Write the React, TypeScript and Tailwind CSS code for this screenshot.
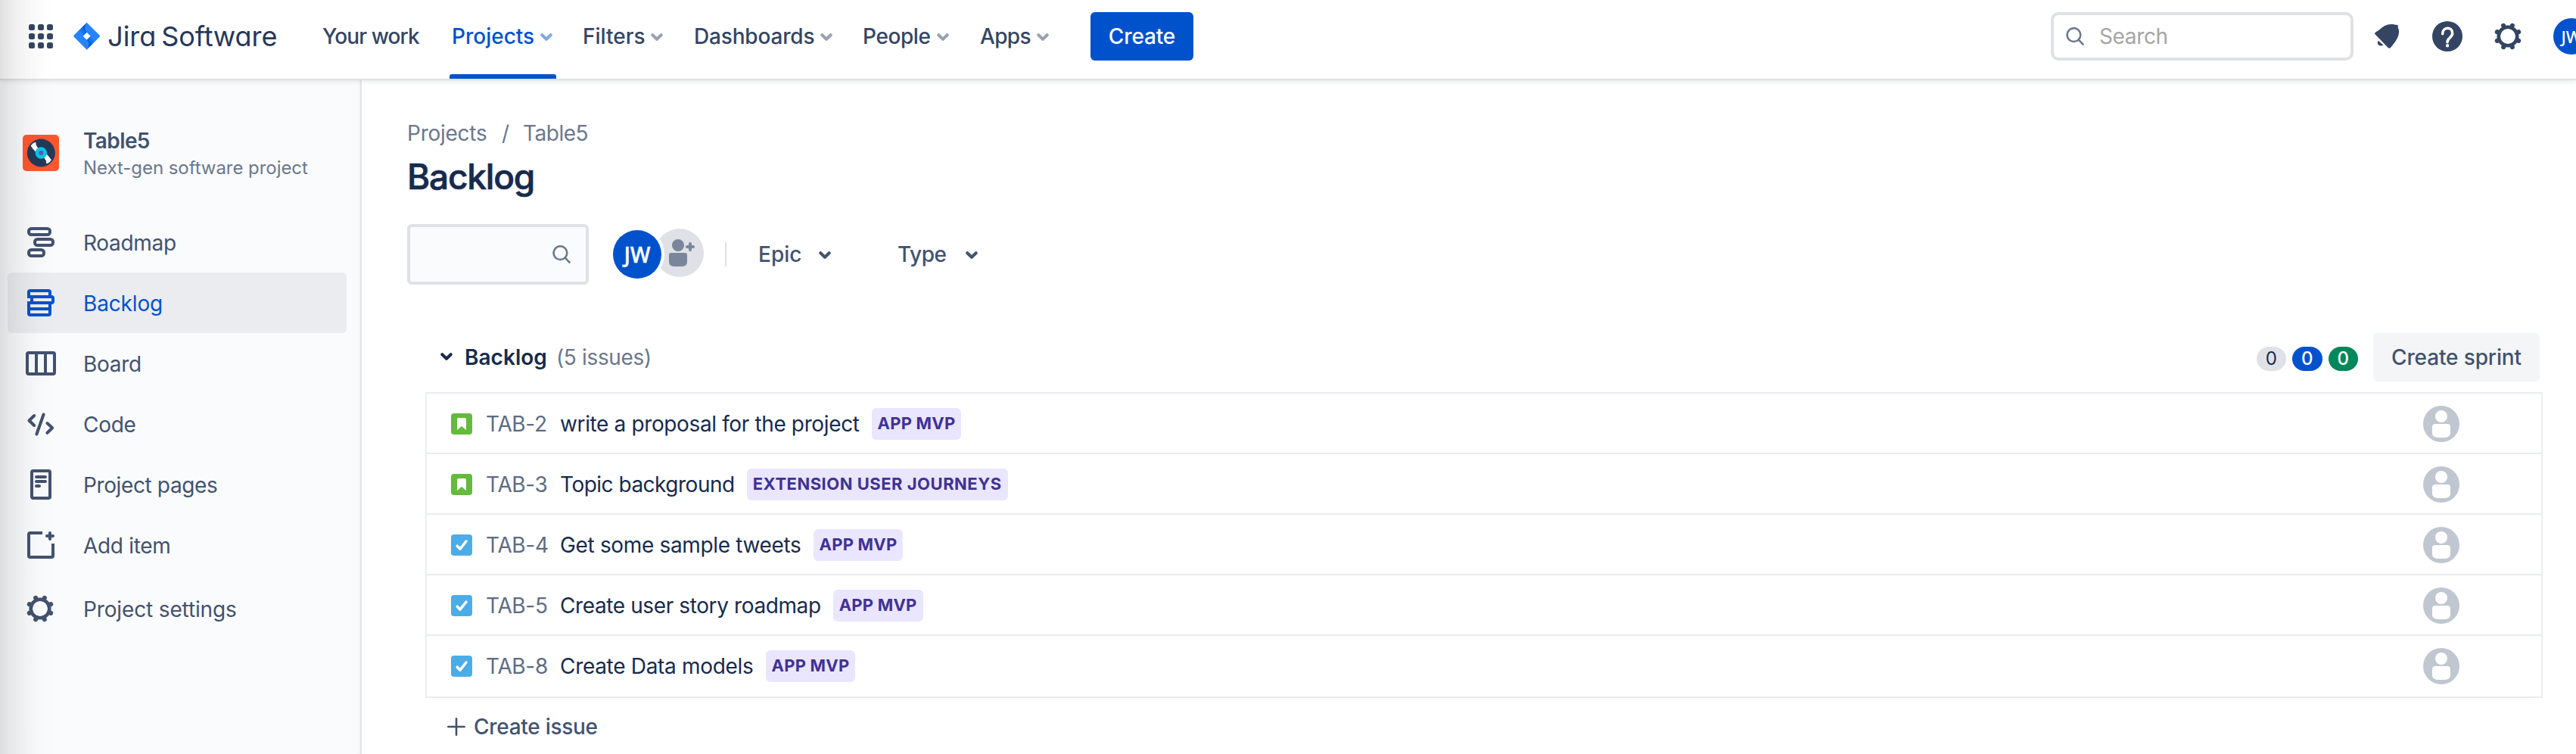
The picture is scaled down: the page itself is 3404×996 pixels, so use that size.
import React from "react";
import { clsx } from "clsx";

function Chevron({ className }: { className?: string }) {
  return (
    <svg viewBox="0 0 16 10" className={clsx("h-[10px] w-4 shrink-0", className)} fill="none" stroke="currentColor" strokeWidth="4" strokeLinecap="round" strokeLinejoin="round">
      <path d="M2.3 2.2 8 7.8l5.7-5.6" />
    </svg>
  );
}

function SearchIcon({ className }: { className?: string }) {
  return (
    <svg viewBox="0 0 24 24" className={clsx("size-6 shrink-0", className)} fill="none" stroke="currentColor" strokeWidth="2.6" strokeLinecap="round">
      <circle cx="10.4" cy="10.1" r="8.9" />
      <path d="m16.8 16.6 5.8 6" />
    </svg>
  );
}

const teeth = [22.5, 67.5, 112.5, 157.5, 202.5, 247.5, 292.5, 337.5];

function Gear({ className }: { className?: string }) {
  return (
    <svg viewBox="-24 -24 48 48" className={clsx("size-12 shrink-0", className)} fill="none" stroke="currentColor">
      <circle r="12.3" strokeWidth="4.6" />
      {teeth.map((a) => (
        <path key={a} d="M0-13v-2.4" strokeWidth="6" strokeLinecap="round" transform={`rotate(${a})`} />
      ))}
    </svg>
  );
}

function JiraMark() {
  return (
    <svg viewBox="232 88 106 112" className="h-[37.3px] w-[35.3px] shrink-0">
      <defs>
        <linearGradient id="fold-top" x1="285" y1="108" x2="257" y2="128" gradientUnits="userSpaceOnUse">
          <stop offset="0.1" stopColor="#0052cc" />
          <stop offset="1" stopColor="#2684ff" />
        </linearGradient>
        <linearGradient id="fold-bottom" x1="286" y1="180" x2="314" y2="160" gradientUnits="userSpaceOnUse">
          <stop offset="0.1" stopColor="#0052cc" />
          <stop offset="1" stopColor="#2684ff" />
        </linearGradient>
      </defs>
      <path fill="#2684ff" fillRule="evenodd" d="M285 90l50 50q4 4 0 8l-50 50-50-50q-4-4 0-8zM285 129l-15 15 15 15.500 15-15.500z" />
      <path fill="url(#fold-top)" d="M285 91c-10 11-10 27 0 38l-15 15-17-21z" />
      <path fill="url(#fold-bottom)" d="M285 197c11-11 11-27 0-37.500l15-15.500 17 21z" />
    </svg>
  );
}

function AppSwitcher() {
  return (
    <div className="grid grid-cols-3 gap-1 text-[#344563]">
      {[0, 1, 2, 3, 4, 5, 6, 7, 8].map((i) => (
        <span key={i} className="size-2 rounded-[2.500px] bg-[#344563]" />
      ))}
    </div>
  );
}

const topNav = [
  { label: "Your work", slot: "w-[168px]", inner: "w-[140px]", tracking: "tracking-[-0.88px]", menu: false },
  { label: "Projects", slot: "w-[173px]", inner: "w-[136px] pl-[3px]", tracking: "tracking-normal", menu: true, active: true },
  { label: "Filters", slot: "w-[147px]", inner: "w-[109px] pl-[3px]", tracking: "tracking-normal", menu: true },
  { label: "Dashboards", slot: "w-[223px]", inner: "w-[186px] pl-[3px]", tracking: "tracking-[-0.17px]", menu: true },
  { label: "People", slot: "w-[155px]", inner: "w-[117px] pl-[3px]", tracking: "tracking-[-0.4px]", menu: true },
  { label: "Apps", slot: "w-[149px]", inner: "w-[94px] pl-[3px]", tracking: "tracking-[-0.66px]", menu: true },
];

function Header() {
  return (
    <header className="relative z-10 flex h-[106px] items-center border-b-2 border-[#dde2e6] bg-white pb-[8px] pl-[38px] shadow-[0_1px_6px_rgba(9,30,66,0.12)]">
      <AppSwitcher />
      <div className="ml-[27px] flex w-[331px] items-center">
        <JiraMark />
        <span className="ml-[10px] whitespace-nowrap text-[36px] leading-none tracking-[-0.1px] text-[#253858] [font-feature-settings:'cv11'] [word-spacing:-3px]">Jira Software</span>
      </div>
      <nav className="-ml-[2px] flex h-24 items-center text-[28px] font-medium leading-none text-[#344563]">
        {topNav.map((n) => (
          <div key={n.label} className={clsx("relative flex h-full shrink-0 items-center", n.slot)}>
            <div className={clsx("flex items-center justify-between", n.inner, n.tracking, n.active && "text-[#0052cc]")}>
              <span>{n.label}</span>
              {n.menu && <Chevron className={n.active ? "mt-[2px] text-[#7fa8e5]" : "mt-[2px] text-[#99a2b1]"} />}
            </div>
            {n.active && <span className="absolute left-0 top-[98px] h-[6px] w-[141px] rounded-t-[3px] bg-[#0052cc]" />}
          </div>
        ))}
      </nav>
      <button className="h-16 w-[136px] rounded-[6px] bg-[#0052cc] text-[28px] font-medium leading-none tracking-[-0.14px] text-white">Create</button>
      <div className="ml-auto flex w-[694px] items-center overflow-hidden">
        <div className="flex h-16 w-[400px] shrink-0 items-center rounded-[10px] border-4 border-[#dfe1e6] bg-white pl-4">
          <SearchIcon className="text-[#6b778c]" />
          <span className="ml-[20px] text-[28px] leading-none tracking-[-0.37px] text-[#a5a5a5]">Search</span>
        </div>
        <svg viewBox="78 60 108 108" className="ml-[26px] size-9 shrink-0 text-[#344563]" fill="currentColor">
          <path d="M84 104q-1-3 3-6l17-11c12-11 26-21 46-21 8 0 12 1 18 3l5-1 4 4-1 7c3 5 5 13 4 21-1 15-9 27-16 37l-17 22q-5 5-10 0z" />
          <path d="M98 131c-5 8-2 19 9 20 6 0 9-1 12-2z" />
        </svg>
        <svg viewBox="312 54 120 120" className="ml-[42px] size-10 shrink-0">
          <circle cx="372" cy="114" r="60" fill="#344563" />
          <path d="M353 104C353 75 392 75 392 101c0 20-20 17-20 36" fill="none" stroke="#fff" strokeWidth="10.500" strokeLinecap="round" />
          <rect x="366" y="145" width="12" height="12" rx="3" fill="#fff" />
        </svg>
        <Gear className="ml-[35.500px] text-[#344563]" />
        <div className="ml-[36.500px] flex size-12 shrink-0 items-center justify-center rounded-full bg-[#0052cc] font-['Noto_Sans'] text-[22px] font-medium leading-none text-white">JW</div>
      </div>
    </header>
  );
}

function LineIcon({ children }: { children: React.ReactNode }) {
  return (
    <svg viewBox="0 0 48 48" className="size-12 shrink-0" fill="none" stroke="currentColor" strokeWidth="4">
      {children}
    </svg>
  );
}

const sideNav = [
  {
    label: "Roadmap",
    tracking: "tracking-[-0.3px]",
    icon: (
      <LineIcon>
        <rect x="8" y="6" width="28" height="8" rx="3.500" />
        <rect x="16" y="20" width="24" height="8" rx="3.500" />
        <rect x="8" y="34" width="20" height="8" rx="3.500" />
      </LineIcon>
    ),
  },
  {
    label: "Backlog",
    tracking: "tracking-[-0.16px]",
    active: true,
    icon: (
      <LineIcon>
        <path d="M8 18v-8q0-2 2-2h24q2 0 2 2v6H8" />
        <path d="M12 16v8M36 16h2q2 0 2 2v4q0 2-2 2H8M8 22v16q0 2 2 2h24q2 0 2-2V24M8 32h28" />
      </LineIcon>
    ),
  },
  {
    label: "Board",
    tracking: "tracking-[-0.3px]",
    icon: (
      <LineIcon>
        <rect x="6" y="10" width="36" height="28" rx="2" />
        <path d="M18 10v28M30 10v28" />
      </LineIcon>
    ),
  },
  {
    label: "Code",
    tracking: "tracking-[-0.3px]",
    icon: (
      <LineIcon>
        <path d="m15.200 13-6.700 6.500 6.700 6.500M27.600 11.500l-9.200 26M32.400 23l6.800 6.200-6.800 6.600" strokeLinecap="round" strokeLinejoin="round" />
      </LineIcon>
    ),
  },
  {
    label: "Project pages",
    tracking: "tracking-[-0.38px]",
    icon: (
      <LineIcon>
        <rect x="12" y="6" width="24" height="36" rx="2" />
        <path d="M18 14h12M18 20h12M18 26h4" strokeLinecap="round" />
      </LineIcon>
    ),
  },
  {
    label: "Add item",
    tracking: "tracking-[-0.3px]",
    icon: (
      <LineIcon>
        <path d="M26 8H10q-2 0-2 2v28q0 2 2 2h28q2 0 2-2V22" />
        <path d="M36 8v8M32 12h8" strokeLinecap="round" />
      </LineIcon>
    ),
  },
  { label: "Project settings", tracking: "tracking-[-0.14px]", icon: <Gear className="-ml-px mr-px" />, spaced: true },
];

function Sidebar() {
  return (
    <aside className="flex w-[478px] shrink-0 flex-col border-r-2 border-[#e4e5e7] bg-[#fafbfc] px-[10px] pt-[62px] shadow-[inset_-4px_0_4px_-3px_rgba(9,30,66,0.05)]">
      <div className="flex items-start pl-5">
        <svg viewBox="0 0 48 48" className="mt-[10px] size-12 shrink-0">
          <rect width="48" height="48" rx="5" fill="#ff5630" />
          <circle cx="24.300" cy="24" r="18.500" fill="#253858" />
          <path fill="#fff" d="M10.700 14.700q2-4 6.600-5l.4 4 3.600 5.300-4.300 3.600-3.800-4.300zM37.900 33.300q-2 4-6.600 5l-.4-4-3.600-5.300 4.300-3.600 3.800 4.300z" />
          <circle cx="24.300" cy="24" r="7.700" fill="#00c7e5" />
          <circle cx="24.300" cy="24" r="3" fill="#6554c0" />
        </svg>
        <div className="ml-[32px] whitespace-nowrap">
          <div className="text-[28px] font-semibold leading-[36px] tracking-[-0.6px] text-[#42526e]">Table5</div>
          <div className="text-[24px] leading-[35px] tracking-[-0.05px] text-[#6b778c]">Next-gen software project</div>
        </div>
      </div>
      <nav className="mt-[41px] w-[448px] text-[28px] leading-none text-[#42526e]">
        {sideNav.map((n) => (
          <div
            key={n.label}
            className={clsx("flex h-20 items-center rounded-[6px] pl-5", n.active && "bg-[#ebecf0] text-[#0052cc]", n.spaced && "mt-1")}
          >
            {n.icon}
            <span className={clsx("ml-[32px] mt-[2px]", n.tracking)}>{n.label}</span>
          </div>
        ))}
      </nav>
    </aside>
  );
}

function Filters() {
  return (
    <div className="mt-[35px] flex h-20 items-center text-[28px] font-medium leading-none text-[#42526e]">
      <div className="flex h-20 w-[240px] items-center justify-end rounded-[6px] border-4 border-[#dfe1e6] bg-[#fafbfc] pr-5">
        <SearchIcon className="text-[#6b778c]" />
      </div>
      <div className="z-[1] ml-8 flex size-16 items-center justify-center rounded-full bg-[#0052cc] font-['Noto_Sans'] text-[28px] text-white ring-4 ring-white [-webkit-text-stroke:0.500px_#fff]">JW</div>
      <svg viewBox="0 0 64 64" className="-ml-2 -mt-1 size-16">
        <circle cx="32" cy="32" r="32" fill="#dfe1e6" />
        <circle cx="30" cy="22" r="8" fill="#7a869a" />
        <path d="M18 35q0-3 3-3h18q3 0 3 3v9q0 6-8 6h-8q-8 0-8-6z" fill="#7a869a" />
        <path d="M46 20v8M42 24h8" stroke="#7a869a" strokeWidth="4" strokeLinecap="round" />
      </svg>
      <span className="ml-7 h-8 w-[2px] bg-[#dfe1e6]" />
      <div className="ml-[42px] flex w-24 items-center justify-between">
        Epic
        <Chevron className="mt-[2px]" />
      </div>
      <div className="ml-[88px] flex w-[106px] items-center justify-between tracking-[-0.5px]">
        Type
        <Chevron className="mt-[2px]" />
      </div>
    </div>
  );
}

const issues = [
  { key: "TAB-2", story: true, title: "write a proposal for the project", tracking: "tracking-[-0.37px]", epic: "APP MVP" },
  { key: "TAB-3", story: true, title: "Topic background", tracking: "tracking-[-0.5px]", epic: "EXTENSION USER JOURNEYS" },
  { key: "TAB-4", story: false, title: "Get some sample tweets", tracking: "tracking-[-0.34px]", epic: "APP MVP" },
  { key: "TAB-5", story: false, title: "Create user story roadmap", tracking: "tracking-[-0.39px]", epic: "APP MVP" },
  { key: "TAB-8", story: false, title: "Create Data models", tracking: "tracking-[-0.31px]", epic: "APP MVP" },
];

function TypeIcon({ story }: { story: boolean }) {
  return (
    <svg viewBox="0 0 28 28" className="size-7 shrink-0">
      <rect width="28" height="28" rx="4" fill={story ? "#63ba3c" : "#4bade8"} />
      {story ? (
        <path d="M8 8q0-2 2-2h8q2 0 2 2v14l-6-5-6 5z" fill="#fff" />
      ) : (
        <path d="m8.200 15.200 3.800 4L20 9" fill="none" stroke="#fff" strokeWidth="3.500" strokeLinecap="round" strokeLinejoin="round" />
      )}
    </svg>
  );
}

function Backlog() {
  return (
    <section className="ml-6 mt-16 w-[2798px] leading-none">
      <div className="flex h-16 items-center pl-5 pr-1 text-[28px]">
        <Chevron className="-mt-[2px] text-[#172b4d]" />
        <h2 className="ml-4 w-[121px] font-semibold tracking-[0.03px] text-[#172b4d]">Backlog</h2>
        <span className="tracking-[-0.35px] text-[#6b778c]">(5 issues)</span>
        <div className="ml-auto mt-1 flex gap-2 text-[24px]">
          <span className="flex h-8 w-[39.500px] items-center justify-center rounded-full bg-[#dfe1e6] text-[#172b4d]">0</span>
          <span className="flex h-8 w-[39.500px] items-center justify-center rounded-full bg-[#0052cc] font-medium text-white">0</span>
          <span className="flex h-8 w-[39.500px] items-center justify-center rounded-full bg-[#00875a] font-medium text-white">0</span>
        </div>
        <button className="ml-5 h-16 w-[220px] rounded-[6px] bg-[#f4f5f7] font-medium tracking-[-0.13px] text-[#42526e]">Create sprint</button>
      </div>
      <div className="mt-[14px] border-x-2 border-t-2 border-[#ebecf0]">
        {issues.map((it, i) => (
          <div
            key={it.key}
            className={clsx(
              "flex items-center whitespace-nowrap border-b-2 border-[#ebecf0] pl-8 pr-[108px] pt-[2px] text-[28px]",
              i === issues.length - 1 ? "h-[82px] pb-[2px]" : "h-20"
            )}
          >
            <TypeIcon story={it.story} />
            <span className="ml-[18px] w-[98px] tracking-[-0.32px] text-[#5e6c84]">{it.key}</span>
            <span className={clsx("text-[#172b4d]", it.tracking)}>{it.title}</span>
            <span
              className={clsx(
                "ml-[16px] flex h-[42px] items-center rounded-[6px] bg-[#eae6ff] px-2 pb-[2px] text-[22px] font-bold text-[#403294]",
                it.epic === "APP MVP" ? "tracking-[0.22px]" : "tracking-[0.5px]"
              )}
            >
              {it.epic}
            </span>
            <svg viewBox="0 0 48 48" className="ml-auto size-12 shrink-0">
              <circle cx="24" cy="24" r="24" fill="#c1c7d0" />
              <circle cx="24" cy="14" r="8" fill="#fff" />
              <path d="M12 28q0-4 4-4h16q4 0 4 4v8q0 6-9 6h-6q-9 0-9-6z" fill="#fff" />
            </svg>
          </div>
        ))}
      </div>
      <div className="mt-[14px] flex h-12 items-center pl-[29px] text-[28px] font-medium tracking-[-0.28px] text-[#42526e]">
        <svg viewBox="0 0 24 24" className="size-6" stroke="currentColor" strokeWidth="2.600" strokeLinecap="round">
          <path d="M12 1.300v21.400M1.300 12h21.400" />
        </svg>
        <span className="ml-[11px]">Create issue</span>
      </div>
    </section>
  );
}

export default function App() {
  return (
    <div className="relative flex h-[996px] w-[3404px] flex-col overflow-hidden bg-white font-['Inter',sans-serif]">
      <Header />
      <div className="flex flex-1">
        <Sidebar />
        <main className="flex-1 bg-white pl-[60px] pt-[52px]">
          <div className="flex h-9 items-center text-[28px] leading-none text-[#6b778c]">
            <span className="w-[125px] tracking-[-0.25px]">Projects</span>
            <span className="w-[28px]">/</span>
            <span className="tracking-[-0.5px]">Table5</span>
          </div>
          <h1 className="mt-[11px] text-[46px] font-medium leading-[56px] tracking-[-1.2px] text-[#172b4d] [-webkit-text-stroke:0.700px_#172b4d]">Backlog</h1>
          <Filters />
          <Backlog />
        </main>
      </div>
      <div className="pointer-events-none absolute inset-y-0 left-0 z-20 w-[72px] bg-[linear-gradient(to_right,rgba(0,0,0,0.12),rgba(0,0,0,0.075)_20%,rgba(0,0,0,0.03)_50%,rgba(0,0,0,0.008)_80%,transparent)]" />
    </div>
  );
}
